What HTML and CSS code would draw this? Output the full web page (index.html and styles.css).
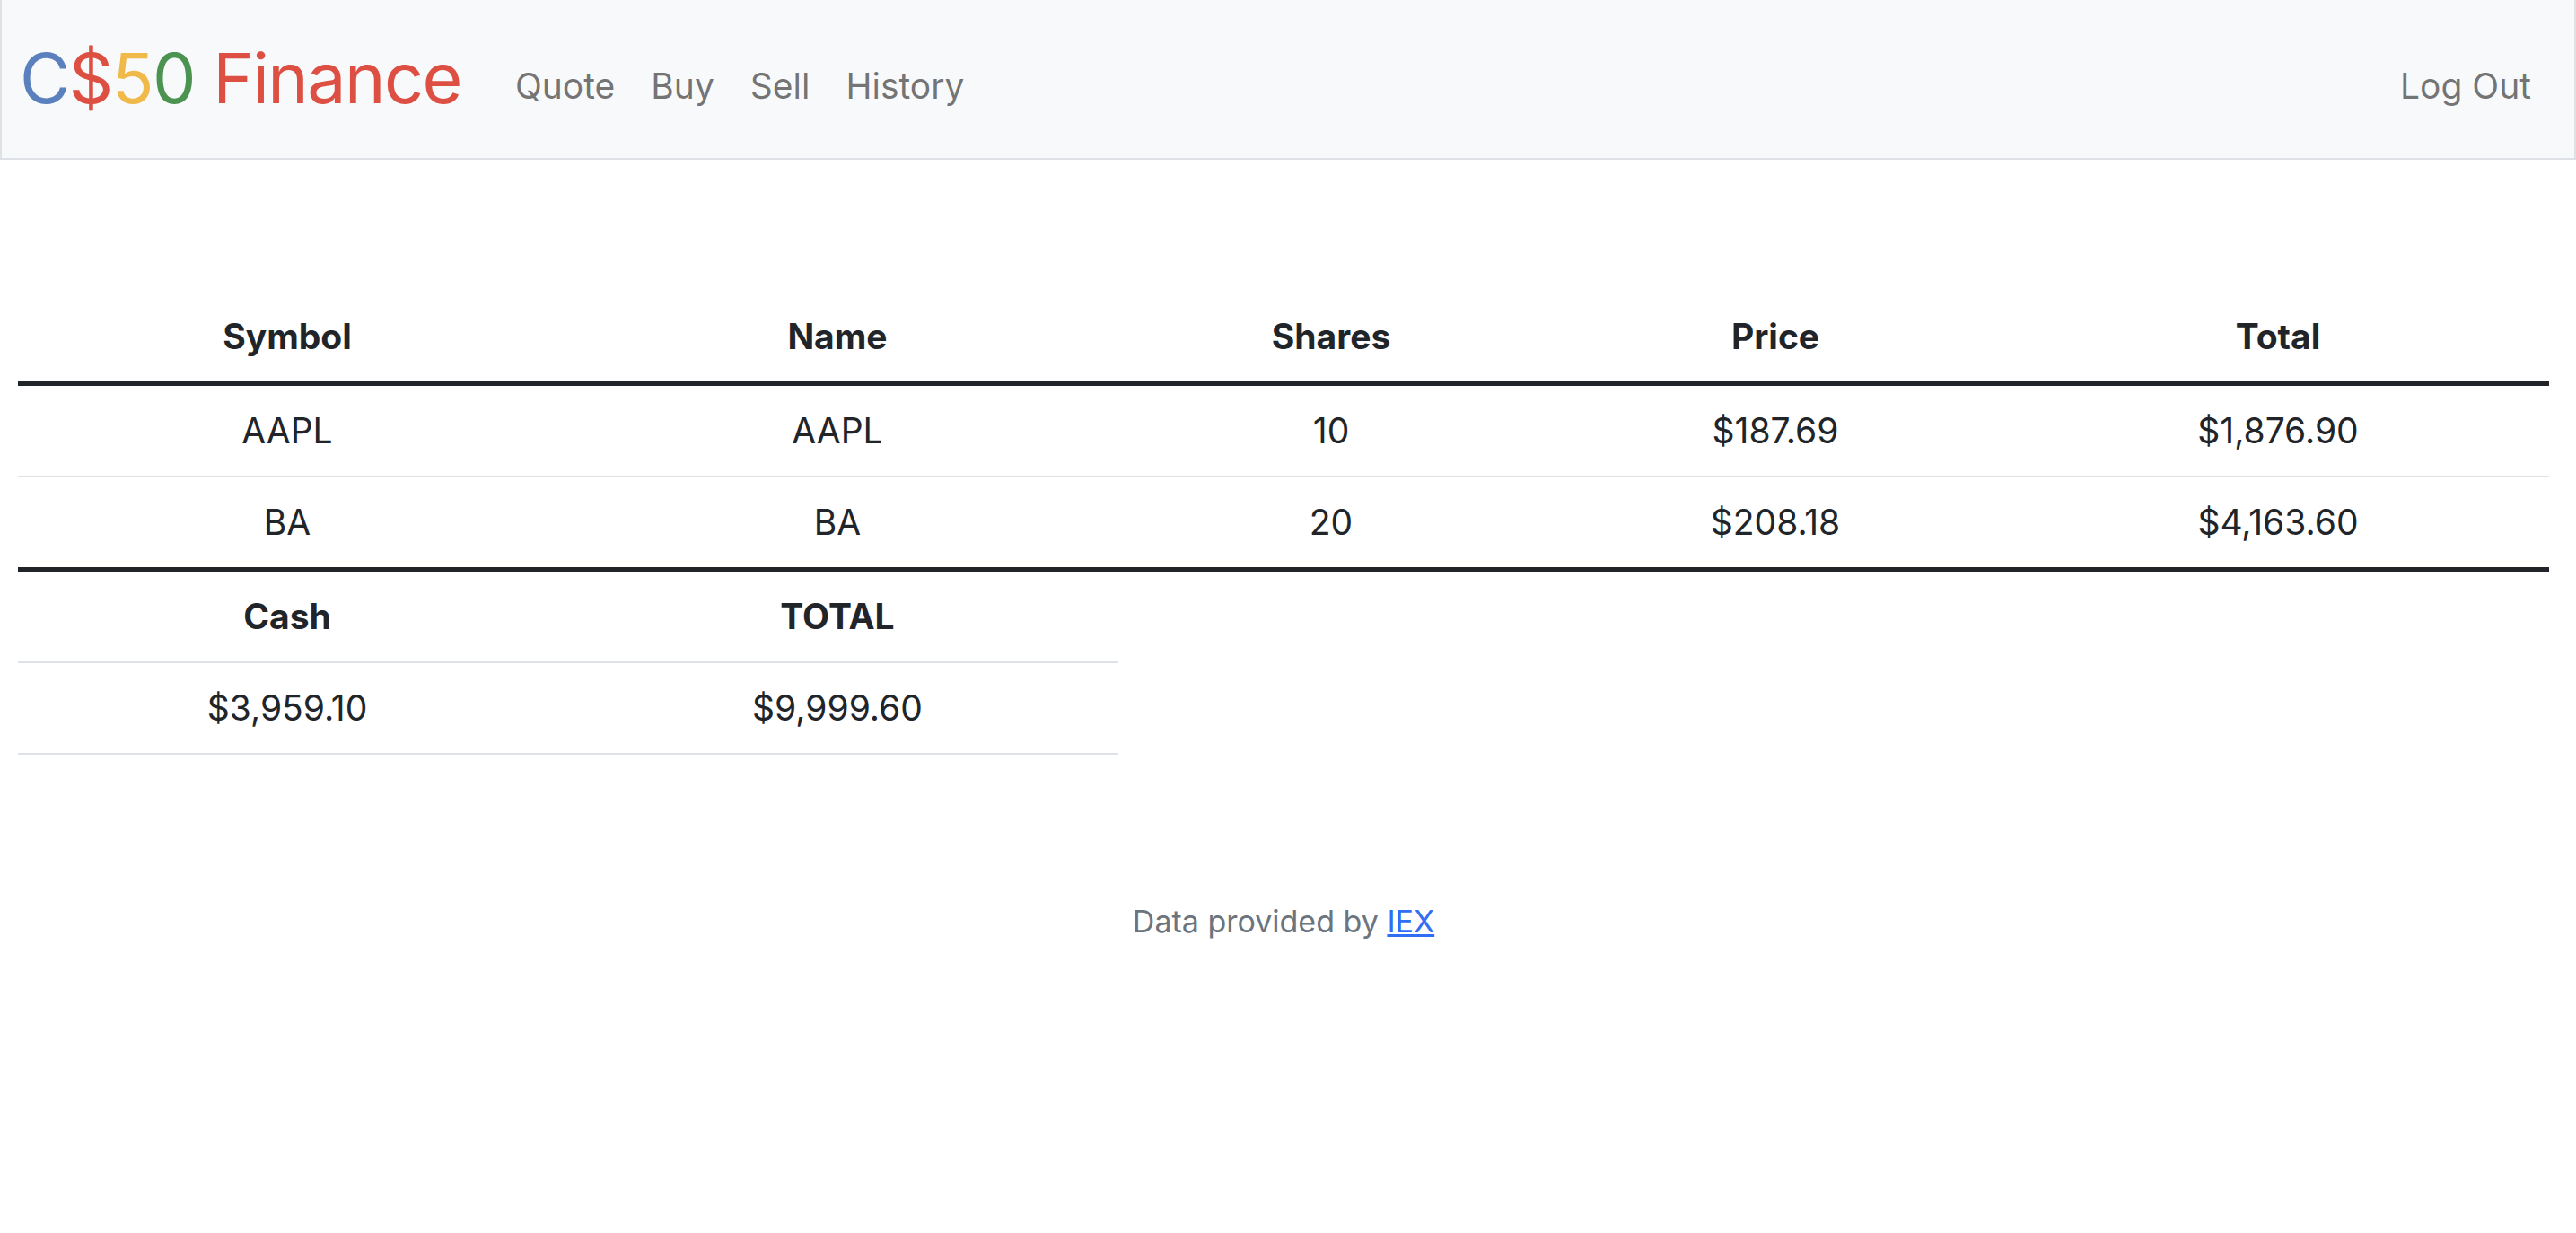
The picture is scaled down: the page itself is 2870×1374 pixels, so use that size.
FILE: index.html
```html
<!DOCTYPE html>
<html lang="en">
<head>
<meta charset="utf-8">
<title>C$50 Finance: Portfolio</title>
<link rel="stylesheet" href="styles.css">
</head>
<body>
<nav class="navbar">
  <a class="brand" href="#"><span class="blue">C</span><span class="red">$</span><span class="yellow">5</span><span class="green">0</span> <span class="red">Finance</span></a>
  <ul class="nav-links">
    <li><a href="#">Quote</a></li>
    <li><a href="#">Buy</a></li>
    <li><a href="#">Sell</a></li>
    <li><a href="#">History</a></li>
  </ul>
  <ul class="nav-links nav-right">
    <li><a href="#">Log Out</a></li>
  </ul>
</nav>
<main class="main">
  <table class="portfolio">
    <colgroup>
      <col class="c1"><col class="c2"><col class="c3"><col class="c4"><col class="c5">
    </colgroup>
    <thead>
      <tr><th>Symbol</th><th>Name</th><th>Shares</th><th>Price</th><th>Total</th></tr>
    </thead>
    <tbody>
      <tr><td>AAPL</td><td>AAPL</td><td>10</td><td>$187.69</td><td>$1,876.90</td></tr>
      <tr><td>BA</td><td>BA</td><td>20</td><td>$208.18</td><td>$4,163.60</td></tr>
    </tbody>
    <tfoot>
      <tr><th>Cash</th><th>TOTAL</th></tr>
      <tr><td>$3,959.10</td><td>$9,999.60</td></tr>
    </tfoot>
  </table>
</main>
<footer class="footer">Data provided by <a href="#">IEX</a></footer>
</body>
</html>
```
FILE: styles.css
```css
html, body {
  margin: 0;
  padding: 0;
  background: #ffffff;
  color: #212529;
  font-family: Inter, "Noto Sans", "Liberation Sans", sans-serif;
}

.navbar {
  box-sizing: border-box;
  height: 178px;
  display: flex;
  align-items: center;
  background: #f8f9fa;
  border: 2px solid #dee2e6;
  border-top-width: 0;
  padding: 0 28px 0 20px;
}

.brand {
  font-size: 77px;
  line-height: 1.5;
  text-decoration: none;
  margin-right: 40px;
  letter-spacing: -1.5px;
}

.blue { color: #5b80be; }
.red { color: #dd4f43; }
.yellow { color: #f0ba4a; }
.green { color: #4c9352; }

.nav-links {
  list-style: none;
  display: flex;
  margin: 16px 0 0 0;
  padding: 0;
}

.nav-links a {
  display: block;
  padding: 20px;
  font-size: 39px;
  line-height: 60px;
  color: rgba(0, 0, 0, 0.55);
  text-decoration: none;
}

.nav-right {
  margin-left: auto;
}

.main {
  padding: 147px 30px 120px 20px;
}

.portfolio {
  width: 2820px;
  table-layout: fixed;
  border-collapse: collapse;
  font-size: 39px;
  line-height: 60px;
  text-align: center;
  margin-bottom: 40px;
}

.c1 { width: 600px; }
.c2 { width: 626px; }
.c3 { width: 474px; }
.c4 { width: 516px; }
.c5 { width: 604px; }

.portfolio th,
.portfolio td {
  padding: 20px;
  border-bottom: 2px solid #dee2e6;
}

.portfolio th {
  font-weight: 700;
}

.portfolio thead th {
  border-bottom: 5px solid #212529;
}

.portfolio tbody tr:last-child td {
  border-bottom: 5px solid #212529;
}

.footer {
  text-align: center;
  font-size: 34px;
  line-height: 52px;
  color: #6c757d;
  padding-right: 10px;
}

.footer a {
  color: #2f6ef5;
}
```
